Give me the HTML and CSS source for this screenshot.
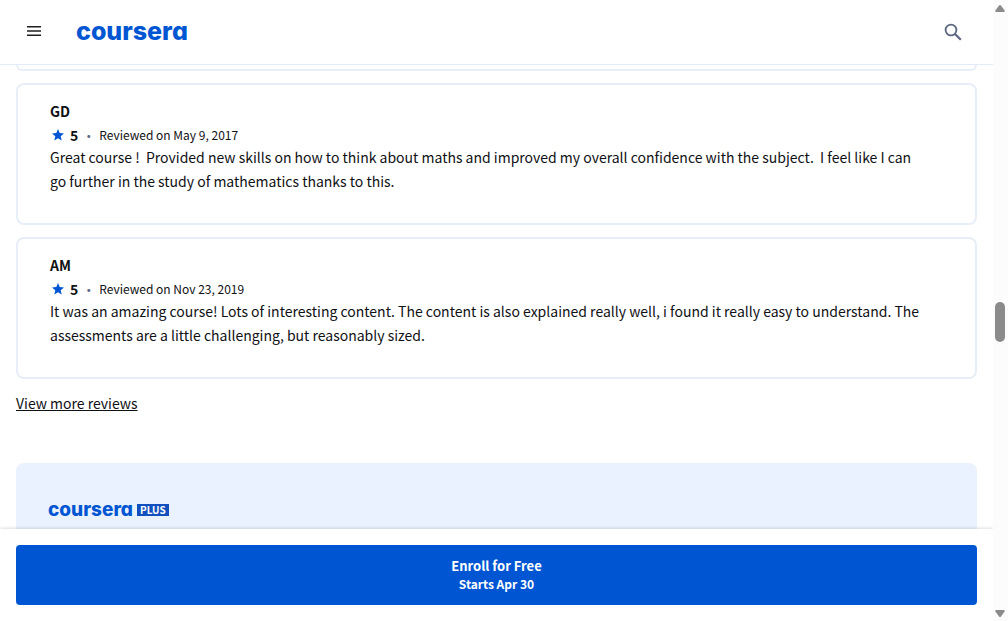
FILE: index.html
```html
<!DOCTYPE html>
<html lang="en">
<head>
<meta charset="utf-8">
<title>Course reviews | Coursera</title>
<link rel="stylesheet" href="styles.css">
</head>
<body>
<div class="page">
  <header class="header">
    <button class="icon-button" type="button" aria-label="Menu">
      <svg width="14" height="10" viewBox="0 0 14 10" fill="#1f1f1f"><path d="M0 0h14v1.5H0zM0 4.25h14v1.5H0zM0 8.5h14V10H0z"/></svg>
    </button>
    <a class="logo" href="#">coursera</a>
    <button class="icon-button search" type="button" aria-label="Search">
      <svg width="18" height="18" viewBox="0 0 18 18" fill="none" stroke="#5b6780" stroke-width="1.8"><circle cx="7" cy="7" r="5.4"/><path d="M11 11l5.800 5.800" stroke-width="2.200"/></svg>
    </button>
  </header>
  <main class="content">
    <div class="card-end"></div>
    <article class="card">
      <h3 class="name">GD</h3>
      <div class="rating">
        <svg class="star" width="12" height="12" viewBox="0 0 12 12" fill="#0056d2"><path d="M6 0l1.700 4 4.300.4-3.300 2.800 1 4.300L6 9.200l-3.700 2.300 1-4.300L0 4.400 4.300 4z"/></svg>
        <span class="score">5</span>
        <span class="dot">·</span>
        <span class="date">Reviewed on May 9, 2017</span>
      </div>
      <p class="text">Great course !&nbsp; Provided new skills on how to think about maths and improved my overall confidence with the subject.&nbsp; I feel like I can go further in the study of mathematics thanks to this.</p>
    </article>
    <article class="card">
      <h3 class="name">AM</h3>
      <div class="rating">
        <svg class="star" width="12" height="12" viewBox="0 0 12 12" fill="#0056d2"><path d="M6 0l1.700 4 4.300.4-3.300 2.800 1 4.300L6 9.200l-3.700 2.300 1-4.300L0 4.400 4.300 4z"/></svg>
        <span class="score">5</span>
        <span class="dot">·</span>
        <span class="date">Reviewed on Nov 23, 2019</span>
      </div>
      <p class="text">It was an amazing course! Lots of interesting content. The content is also explained really well, i found it really easy to understand. The assessments are a little challenging, but reasonably sized.</p>
    </article>
    <a class="more" href="#">View more reviews</a>
    <section class="promo">
      <span class="promo-logo">coursera</span>
      <span class="plus">PLUS</span>
    </section>
  </main>
  <footer class="enroll-bar">
    <button class="enroll" type="button">
      <span class="enroll-title">Enroll for Free</span>
      <span class="enroll-date">Starts Apr 30</span>
    </button>
  </footer>
</div>
<div class="scrollbar" aria-hidden="true">
  <svg width="10" height="8" viewBox="0 0 10 8" fill="#8b8b8b"><path d="M4 .6Q5-.4 6 .6L9.600 5.500Q10 7 8.800 7H1.200Q0 7 .4 5.500z"/></svg>
  <div class="thumb"></div>
  <svg class="arrow-down" width="10" height="8" viewBox="0 0 10 8" fill="#8b8b8b"><path d="M4 7.400Q5 8.400 6 7.400L9.600 2.500Q10 1 8.800 1H1.200Q0 1 .4 2.500z"/></svg>
</div>
</body>
</html>
```
FILE: styles.css
```css
* {
  box-sizing: border-box;
}

body {
  margin: 0;
  height: 100vh;
  display: grid;
  grid-template-columns: 1fr 15px;
  overflow: hidden;
  background: #fff;
  color: #0f1114;
  font-family: "Noto Sans CJK SC", "Noto Sans", sans-serif;
  font-size: 14px;
  line-height: 24px;
}

button {
  font: inherit;
  border: 0;
  cursor: pointer;
}

.page {
  display: flex;
  flex-direction: column;
  height: 100vh;
  min-width: 0;
}

.header {
  flex: none;
  display: flex;
  align-items: center;
  height: 65px;
  padding: 0 23px 2px 16px;
  border-bottom: 1px solid #e3eaf8;
}

.icon-button {
  display: flex;
  align-items: center;
  justify-content: center;
  width: 36px;
  height: 36px;
  padding: 0;
  background: none;
}

.search {
  margin-left: auto;
  width: 34px;
  padding-top: 2px;
}

.logo,
.promo-logo {
  color: #0056d2;
  font-family: Inter, sans-serif;
  font-feature-settings: "cv11";
  font-weight: 800;
  text-decoration: none;
}

.logo {
  margin-left: 24px;
  font-size: 25px;
  line-height: 32px;
}

.content {
  flex: 1;
  min-height: 0;
  overflow: hidden;
  padding: 0 16px;
}

.card-end {
  height: 6px;
  margin-bottom: 12px;
  border: 2px solid #e8eef7;
  border-top: 0;
  border-radius: 0 0 8px 8px;
}

.card {
  margin-bottom: 12px;
  padding: 14px 48px 30px 32px;
  border: 2px solid #e8eef7;
  border-radius: 8px;
}

.name {
  margin: 0;
  font-size: 14px;
  font-weight: 700;
}

.rating {
  display: flex;
  align-items: center;
  height: 22px;
  padding: 2px 0 0 2px;
}

.score {
  margin-left: 6px;
  font-weight: 700;
}

.dot {
  width: 21px;
  text-align: center;
  color: #5b6780;
}

.date {
  font-size: 12px;
}

.text {
  margin: 0;
}

.more {
  display: inline-block;
  color: #0f1114;
}

.promo {
  display: flex;
  align-items: center;
  gap: 4px;
  margin-top: 48px;
  padding: 35px 32px;
  border-radius: 8px;
  background: #eaf2ff;
}

.promo-logo {
  font-size: 19px;
}

.plus {
  padding: 0 3px;
  background: #1251bd;
  color: #fff;
  font-size: 10px;
  font-weight: 700;
  line-height: 12px;
}

.enroll-bar {
  position: relative;
  flex: none;
  padding: 16px;
  background: #fff;
  box-shadow: 0 0 4px rgba(0, 0, 0, 0.2);
  clip-path: inset(-4px 0 0 0);
}

.enroll {
  display: flex;
  flex-direction: column;
  align-items: center;
  justify-content: center;
  width: 100%;
  height: 60px;
  border-radius: 4px;
  background: #0056d2;
  color: #fff;
  font-weight: 700;
  line-height: 18px;
}

.enroll-title {
  font-size: 13px;
}

.enroll-date {
  font-size: 12px;
}

.scrollbar {
  display: flex;
  flex-direction: column;
  align-items: center;
  padding: 5px 1px 4px 0;
  background: #fcfcfc;
}

.thumb {
  width: 10px;
  height: 40px;
  margin-top: 289px;
  border-radius: 5px;
  background: #8b8b8b;
}

.arrow-down {
  margin-top: auto;
}
```
